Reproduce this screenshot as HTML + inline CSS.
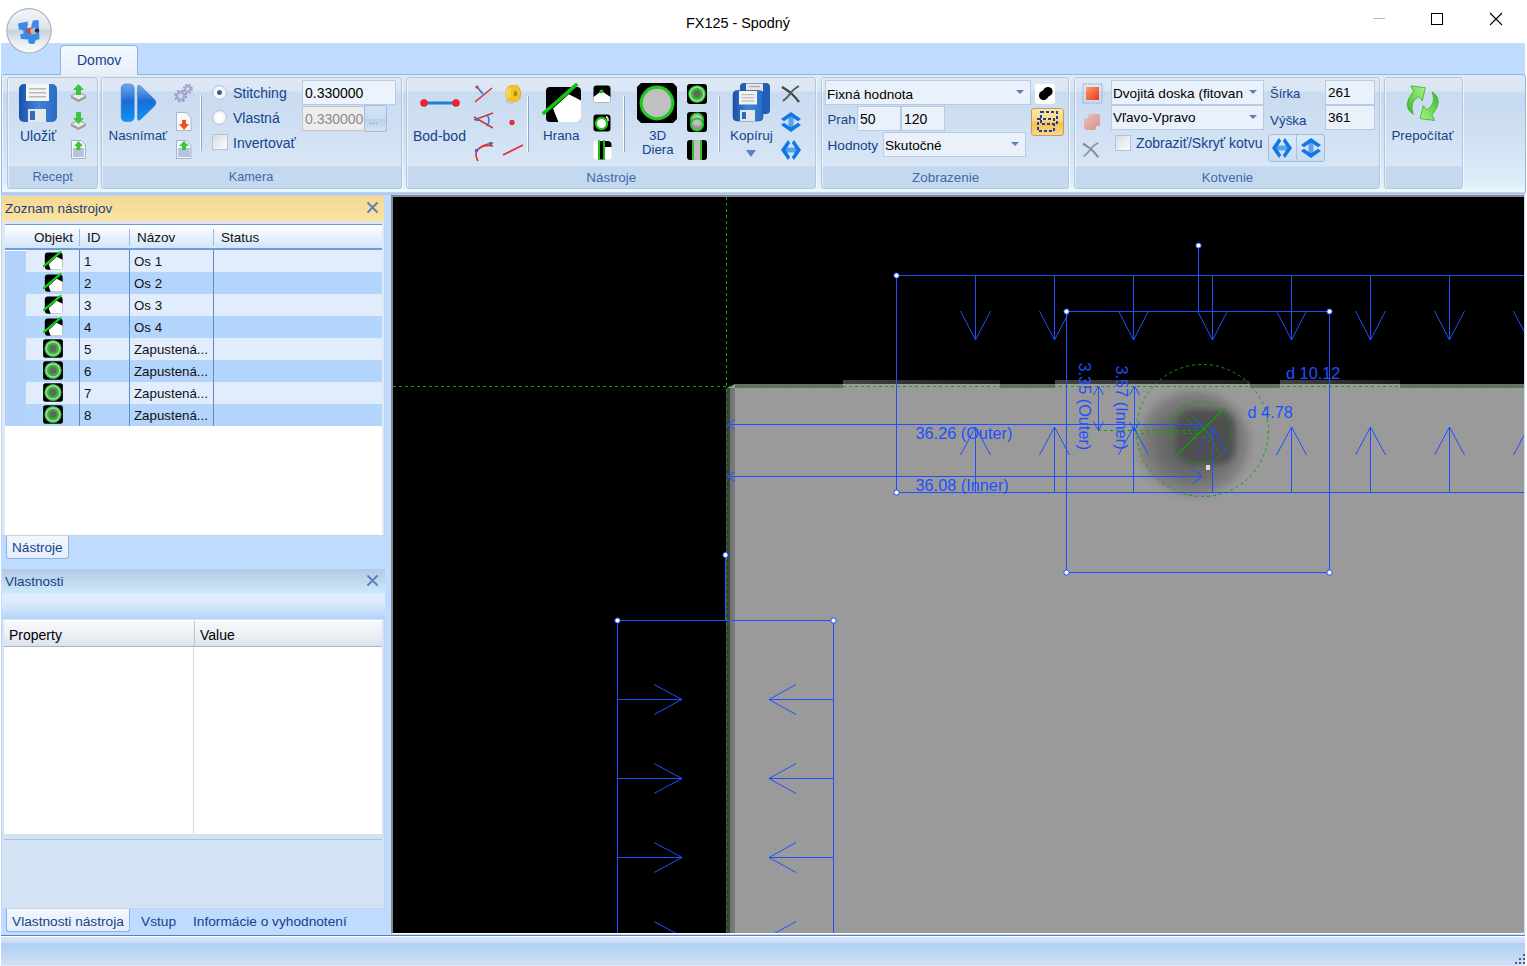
<!DOCTYPE html>
<html><head><meta charset="utf-8">
<style>
*{margin:0;padding:0;box-sizing:border-box}
html,body{width:1527px;height:966px;overflow:hidden;background:#fff;font-family:"Liberation Sans",sans-serif;font-size:14px;position:relative}
.a{position:absolute}
.t{position:absolute;white-space:nowrap;line-height:1}
.lbl{color:#15428b}
.glab{color:#3e6aaa;font-size:13.3px}
.grp{position:absolute;top:77px;height:112px;border:1px solid #b4c7dd;border-radius:3px;box-shadow:inset 1px 0 0 rgba(255,255,255,.55),1px 0 0 rgba(255,255,255,.6);
 background:linear-gradient(#dfe9f5 0px,#dae6f4 13px,#c9dbf0 14px,#d0e0f3 50px,#d8e6f5 88px,#c3d7ee 89px,#c5d9ef 111px)}
.sep{position:absolute;width:2px;background:#8ba7cd;border-left:1px solid #fbfdff}
.inp{position:absolute;background:#eaf1fb;border:1px solid #b5cbe6}
.combo::after{content:"";position:absolute;right:6px;top:9px;border-left:4px solid transparent;border-right:4px solid transparent;border-top:4px solid #5b7fb7}
.row{position:absolute;left:26px;width:356px;height:22px}
.cell{position:absolute;top:0;height:22px;border-left:1px solid #7fa6d9}
</style></head><body>

<!-- title bar -->
<svg class="a" style="left:0;top:0;z-index:5" width="60" height="60" viewBox="0 0 60 60">
<defs><linearGradient id="orb" x1="0" y1="0" x2="0" y2="1"><stop offset="0" stop-color="#f4f6f9"/><stop offset=".45" stop-color="#dde3ea"/><stop offset=".5" stop-color="#c9d2dd"/><stop offset=".75" stop-color="#e6ebf0"/><stop offset="1" stop-color="#fafbfc"/></linearGradient></defs>
<circle cx="29" cy="30.8" r="22.8" fill="#a7b3c1"/>
<circle cx="29" cy="30.8" r="21.6" fill="url(#orb)"/>
<path d="M18 23.5 L27.5 21.5 L28 25 Q26 27.5 29 29 Q32 28 31.5 25 L33 20.5 L38.5 20 L39.5 39 Q36 40 35 41 Q36 44.5 31 44 Q27 43 28.5 39.5 L21 39 L20 34 Q24 35 23.5 31.5 Q22 28.5 19 30Z" fill="#3a8ae8"/>
<path d="M26 29 L31 27.5 L32 33 L27 33.5Z" fill="#d8432e"/>
<rect x="30.5" y="28" width="7" height="6" rx="1.5" fill="#b8b8b8" transform="rotate(-15 34 31)"/>
<circle cx="37" cy="30.5" r="2.3" fill="#23306a"/>
</svg>
<div class="t" style="left:686px;top:15.7px;font-size:14.4px;color:#000">FX125 - Spodný</div>
<div class="a" style="left:1373px;top:18px;width:12px;height:1px;background:#b8b8b8"></div>
<div class="a" style="left:1431px;top:13px;width:12px;height:12px;border:1px solid #000"></div>
<svg class="a" style="left:1489px;top:12px" width="14" height="14"><path d="M1 1L13 13M13 1L1 13" stroke="#000" stroke-width="1.1"/></svg>

<!-- tab strip -->
<div class="a" style="left:1px;top:43px;width:1524px;height:150px;background:#bfdbff"></div>
<div class="a" style="left:60px;top:45px;width:78px;height:31px;border:1px solid #8db2e3;border-bottom:none;border-radius:4px 4px 0 0;background:linear-gradient(#f5f9fe,#e6eef9)"></div>
<div class="t lbl" style="left:77px;top:53px">Domov</div>

<!-- ribbon body -->
<div class="a" style="left:1px;top:74px;width:1525px;height:119px;border:1px solid #92b6e6;border-bottom:none;border-radius:4px 4px 0 0;background:linear-gradient(#e0e9f5 0px,#d9e5f3 17px,#c7d9ef 18px,#cfe0f3 60px,#dcedf9 105px,#e4f5fc 114px,#effcff 115px,#e3f7ff 117px,#9ab1d2 118px)"></div>
<div class="a" style="left:2px;top:75px;width:1px;height:115px;background:#e6f6ff"></div>
<div class="a" style="left:1px;top:193px;width:1524px;height:3px;background:linear-gradient(#aac3e6,#bfdbff)"></div>
<div class="a" style="left:61px;top:74px;width:76px;height:2px;background:#e6eef9"></div>

<!-- groups -->
<div class="grp" style="left:7px;width:91px"></div>
<div class="grp" style="left:101px;width:301px"></div>
<div class="grp" style="left:406px;width:410px"></div>
<div class="grp" style="left:821px;width:248px"></div>
<div class="grp" style="left:1074px;width:306px"></div>
<div class="grp" style="left:1384px;width:79px"></div>


<!-- RECEPT -->
<svg class="a" style="left:18px;top:83px" width="40" height="40" viewBox="0 0 40 40">
 <defs><linearGradient id="fl" x1="0" x2="1"><stop offset="0" stop-color="#1a4fa8"/><stop offset=".5" stop-color="#3d86d8"/><stop offset="1" stop-color="#2a6cc4"/></linearGradient></defs>
 <rect x="1" y="1" width="38" height="38" rx="5" fill="url(#fl)"/>
 <rect x="8" y="1" width="23" height="17" fill="#f4f4f4"/>
 <rect x="11" y="5" width="17" height="1.5" fill="#b9b9b9"/><rect x="11" y="9" width="17" height="1.5" fill="#b9b9b9"/><rect x="11" y="13" width="17" height="1.5" fill="#b9b9b9"/>
 <rect x="10" y="26" width="18" height="13" fill="#e6e6e6"/><rect x="12" y="28" width="5" height="9" fill="#2b6cc8"/>
</svg>
<div class="t lbl" style="left:20px;top:129px;font-size:14px">Uložiť</div>
<svg class="a" style="left:69px;top:83px" width="19" height="21" viewBox="0 0 19 21">
 <path d="M2 13 L9.5 9 L17 13 L9.5 17Z" fill="#e8e8e8" stroke="#a0a0a0"/><path d="M2 13 L2 15 L9.5 19 L17 15 L17 13 L9.5 17Z" fill="#9a9a9a"/>
 <path d="M9.5 1 L15 7 L12 7 L12 12 L7 12 L7 7 L4 7Z" fill="#3cc43c"/>
</svg>
<svg class="a" style="left:69px;top:111px" width="19" height="21" viewBox="0 0 19 21">
 <path d="M2 13 L9.5 9 L17 13 L9.5 17Z" fill="#e8e8e8" stroke="#a0a0a0"/><path d="M2 13 L2 15 L9.5 19 L17 15 L17 13 L9.5 17Z" fill="#9a9a9a"/>
 <path d="M9.5 13 L15 7 L12 7 L12 1 L7 1 L7 7 L4 7Z" fill="#3cc43c"/>
</svg>
<svg class="a" style="left:70px;top:139px" width="17" height="21" viewBox="0 0 17 21">
 <path d="M1.5 1.5 H11 L15.5 6 V19.5 H1.5Z" fill="#f4f6fa" stroke="#9fb3cc"/><rect x="3" y="9" width="11" height="9" fill="#b4c4dc"/>
 <path d="M8.5 2 L13 7 L10.5 7 L10.5 11 L6.5 11 L6.5 7 L4 7Z" fill="#3cc43c"/>
</svg>

<!-- KAMERA -->
<svg class="a" style="left:120px;top:83px" width="38" height="40" viewBox="0 0 38 40">
 <defs><linearGradient id="pb" x1="0" y1="0" x2="0" y2="1"><stop offset="0" stop-color="#6ea8ea"/><stop offset=".3" stop-color="#3b82da"/><stop offset=".45" stop-color="#1a6bd6"/><stop offset="1" stop-color="#0c95f8"/></linearGradient></defs>
 <rect x="1.2" y="1" width="13" height="37.5" rx="4.5" fill="url(#pb)" stroke="#3a78c8" stroke-width=".6"/>
 <path d="M17.5 5 Q17.5 0.5 21 3.5 L34.5 16.5 Q37.5 19.7 34.5 23 L21 36 Q17.5 39 17.5 34.5Z" fill="url(#pb)" stroke="#3a78c8" stroke-width=".6"/>
</svg>
<div class="t lbl" style="left:108.5px;top:129px;font-size:13.4px">Nasnímať</div>
<svg class="a" style="left:173px;top:83px" width="21" height="21" viewBox="0 0 21 21">
 <circle cx="7.6" cy="13" r="5.2" fill="none" stroke="#9c9cc4" stroke-width="2.6" stroke-dasharray="2.2 1.9"/><circle cx="7.6" cy="13" r="3.6" fill="none" stroke="#a8a8d0" stroke-width="2.4"/>
 <circle cx="14.8" cy="5.8" r="3.9" fill="none" stroke="#9c9cc4" stroke-width="2.2" stroke-dasharray="1.7 1.4"/><circle cx="14.8" cy="5.8" r="2.6" fill="none" stroke="#a8a8d0" stroke-width="1.9"/>
</svg>
<svg class="a" style="left:175px;top:111px" width="18" height="21" viewBox="0 0 18 21">
 <path d="M1.5 1.5 H11 L16 6.5 V19.5 H1.5Z" fill="#f7f8fb" stroke="#aab8cc"/>
 <path d="M9 19 L14 13 L11 13 L11 9 L7 9 L7 13 L4 13Z" fill="#f0501e"/>
</svg>
<svg class="a" style="left:175px;top:139px" width="18" height="21" viewBox="0 0 18 21">
 <path d="M1.5 1.5 H11 L16 6.5 V19.5 H1.5Z" fill="#f4f6fa" stroke="#9fb3cc"/><rect x="3" y="9" width="12" height="9" fill="#b4c4dc"/>
 <path d="M9 2 L14 7 L11 7 L11 11 L7 11 L7 7 L4 7Z" fill="#3cc43c"/>
</svg>
<div class="sep" style="left:200px;top:95px;height:56px"></div>
<div class="a" style="left:212px;top:85px;width:15px;height:15px;border-radius:50%;border:1px solid #b5c3d3;background:radial-gradient(#fff 30%,#dfe4ea)"></div>
<div class="a" style="left:217px;top:90px;width:5px;height:5px;border-radius:50%;background:#3a5f94"></div>
<div class="t lbl" style="left:233px;top:86px">Stitching</div>
<div class="a" style="left:212px;top:110px;width:15px;height:15px;border-radius:50%;border:1px solid #b5c3d3;background:radial-gradient(#fff 30%,#dfe4ea)"></div>
<div class="t lbl" style="left:233px;top:111px">Vlastná</div>
<div class="a" style="left:212px;top:134px;width:16px;height:16px;border:1px solid #b5c3d3;background:linear-gradient(135deg,#d8dde3,#fbfcfd)"></div>
<div class="t lbl" style="left:233px;top:136px">Invertovať</div>
<div class="inp" style="left:302px;top:80px;width:94px;height:25px;background:#edf3fc;border-color:#b7cbe5"></div>
<div class="t" style="left:305px;top:86px;color:#000">0.330000</div>
<div class="inp" style="left:302px;top:106px;width:63px;height:25px;background:#ededed;border-color:#c5c5c5"></div>
<div class="t" style="left:305px;top:112px;color:#8b8b8b">0.330000</div>
<div class="a" style="left:364px;top:105px;width:23px;height:27px;border:1px solid #a3bde0;border-radius:2px;background:linear-gradient(#d3e2f4,#cadcf1 50%,#b9d0ec 52%,#d2e3f6)"></div>
<div class="t" style="left:369px;top:114.5px;color:#7d8ea3;font-size:11px">...</div>

<!-- NASTROJE -->
<svg class="a" style="left:418px;top:96px" width="44" height="14" viewBox="0 0 44 14">
 <line x1="6" y1="7" x2="38" y2="7" stroke="#1f7fd6" stroke-width="3"/>
 <circle cx="6" cy="7" r="3.8" fill="#e8242e"/><circle cx="38" cy="7" r="3.8" fill="#e8242e"/>
</svg>
<div class="t lbl" style="left:413px;top:129px">Bod-bod</div>
<svg class="a" style="left:473px;top:83px" width="22" height="22" viewBox="0 0 22 22">
 <line x1="2" y1="19" x2="19" y2="5" stroke="#e0303a" stroke-width="1.6"/><line x1="4" y1="4" x2="10" y2="11" stroke="#1f7fd6" stroke-width="1.8"/><circle cx="4" cy="4" r="1.6" fill="#e0303a"/>
</svg>
<svg class="a" style="left:473px;top:112px" width="22" height="22" viewBox="0 0 22 22">
 <line x1="1" y1="8" x2="20" y2="1" stroke="#e0303a" stroke-width="1.6"/><line x1="1" y1="5" x2="20" y2="16" stroke="#e0303a" stroke-width="1.6"/>
 <path d="M14 3 Q18 8 14 14" fill="none" stroke="#1f7fd6" stroke-width="1.5"/><rect x="3" y="6" width="3" height="3" fill="#1f7fd6"/>
</svg>
<svg class="a" style="left:473px;top:140px" width="22" height="22" viewBox="0 0 22 22">
 <path d="M5 21 Q-1 10 11 6 Q15 5 20 6" fill="none" stroke="#e0303a" stroke-width="1.6"/><path d="M3 11 Q10 4 20 3" fill="none" stroke="#e0303a" stroke-width="1.4"/>
 <rect x="2" y="9" width="3" height="3" fill="#1f7fd6"/><rect x="16" y="2" width="3" height="3" fill="#1f7fd6"/>
</svg>
<svg class="a" style="left:503px;top:83px" width="20" height="22" viewBox="0 0 20 22">
 <defs><linearGradient id="tp" x1="0" x2="1"><stop offset="0" stop-color="#f0d050"/><stop offset=".5" stop-color="#e8b818"/><stop offset="1" stop-color="#d49a08"/></linearGradient></defs>
 <path d="M3 18 L8 21 L11 19 L6 16Z" fill="#d8d8d8" stroke="#a0a0a0" stroke-width=".6"/>
 <path d="M8 2 H12 A6 8.5 0 0 1 12 19 H8 A6 8.5 0 0 1 8 2Z" fill="url(#tp)"/>
 <ellipse cx="12" cy="10.5" rx="5.2" ry="8" fill="#f2c22a"/><ellipse cx="12.5" cy="10.5" rx="1.8" ry="2.8" fill="#b48a10"/>
 <rect x="4" y="6" width="1.2" height="8" fill="#fbe890" opacity=".8"/><rect x="6.5" y="5" width="1.2" height="10" fill="#fbe890" opacity=".8"/>
</svg>
<svg class="a" style="left:503px;top:112.5px" width="20" height="20"><circle cx="9" cy="9.5" r="2.7" fill="#e0303a"/></svg>
<svg class="a" style="left:501px;top:139px" width="24" height="20"><line x1="2" y1="16" x2="22" y2="6" stroke="#e0303a" stroke-width="1.6"/></svg>
<div class="sep" style="left:527px;top:96px;height:56px"></div>
<svg class="a" style="left:541px;top:82px" width="42" height="42" viewBox="0 0 42 42">
 <rect x="5" y="5" width="35" height="35" rx="4" fill="#000"/>
 <path d="M12 26.6 L27.8 12.2 L40 18.5 V36 Q40 40 36 40 H17.4Z" fill="#fff"/>
 <line x1="1.7" y1="32" x2="36.3" y2="1.9" stroke="#12c312" stroke-width="3.6"/>
</svg>
<div class="t lbl" style="left:543px;top:129px;font-size:13.4px">Hrana</div>
<svg class="a" style="left:593px;top:85px" width="18" height="18" viewBox="0 0 18 18">
 <rect x="0.5" y="0.5" width="17" height="17" rx="3" fill="#000"/><path d="M0.5 12 L8.5 6 L17.5 12 V14.5 Q17.5 17.5 14.5 17.5 H3.5 Q0.5 17.5 0.5 14.5Z" fill="#fff"/><circle cx="8.5" cy="6.5" r="2" fill="#18c018"/>
</svg>
<svg class="a" style="left:593px;top:114px" width="18" height="18" viewBox="0 0 18 18">
 <rect x="0.5" y="0.5" width="17" height="17" rx="3" fill="#000"/><circle cx="8.5" cy="9.5" r="5.6" fill="#fff" stroke="#18c818" stroke-width="2.2"/><path d="M13 2.5 Q15.5 4 15 7" fill="none" stroke="#e8e8e8" stroke-width="1.6"/>
</svg>
<svg class="a" style="left:593px;top:140px" width="19" height="20" viewBox="0 0 19 20">
 <rect x="0.5" y="0.5" width="18" height="19" rx="3" fill="#fff"/><path d="M10 1 H15 Q18.5 1 18.5 4.5 V7 H13 Q11 7 11 10 V19.5 H6.5 V1Z" fill="#000"/><rect x="5" y="0" width="1.8" height="20" fill="#18c818"/><rect x="10.2" y="0" width="1.8" height="20" fill="#18c818"/>
</svg>
<div class="sep" style="left:623px;top:96px;height:56px"></div>
<svg class="a" style="left:636px;top:82px" width="42" height="42" viewBox="0 0 42 42">
 <path d="M5 1 H37 L41 5 V37 L37 41 H5 L1 37 V5Z" fill="#000"/>
 <circle cx="21" cy="21" r="15.8" fill="#c0c0c0" stroke="#22c822" stroke-width="3.2"/>
</svg>
<div class="t lbl" style="left:649px;top:128.5px;font-size:13.5px">3D</div>
<div class="t lbl" style="left:642px;top:143px;font-size:13.2px">Diera</div>
<svg class="a" style="left:686px;top:83px" width="22" height="22" viewBox="0 0 22 22">
 <rect x="1" y="1" width="20" height="20" rx="3" fill="#000"/><circle cx="11" cy="11" r="8.8" fill="#26cc26"/><circle cx="11" cy="11" r="6.8" fill="none" stroke="#cdbccd" stroke-width="1.5"/><circle cx="11" cy="11" r="5.8" fill="#1fc21f"/><circle cx="11" cy="11" r="3.4" fill="#6e5f6e"/>
</svg>
<svg class="a" style="left:686px;top:111px" width="22" height="22" viewBox="0 0 22 22">
 <rect x="1" y="1" width="20" height="20" rx="3" fill="#000"/><circle cx="11" cy="8.5" r="6" fill="#c8b8c8" stroke="#22c822" stroke-width="2"/><circle cx="11" cy="13.5" r="6" fill="#c8b8c8" stroke="#22c822" stroke-width="2" fill-opacity=".8"/>
</svg>
<svg class="a" style="left:686px;top:139px" width="22" height="22" viewBox="0 0 22 22">
 <rect x="1" y="1" width="20" height="20" rx="3" fill="#000"/><rect x="7" y="1" width="8" height="20" fill="#c8b8c8"/><rect x="6" y="1" width="2" height="20" fill="#22c822"/><rect x="14" y="1" width="2" height="20" fill="#22c822"/>
</svg>
<div class="sep" style="left:718px;top:96px;height:56px"></div>
<svg class="a" style="left:731px;top:82px" width="40" height="40" viewBox="0 0 40 40">
 <rect x="9" y="1" width="30" height="31" rx="4" fill="#1f5fb8"/><rect x="15" y="1.5" width="17" height="8" fill="#e4e4e4"/><rect x="18" y="4" width="11" height="1.2" fill="#aaa"/>
 <rect x="2" y="8.5" width="30" height="30.5" rx="4" fill="url(#fl)" stroke="#1c4f9c" stroke-width=".6"/><rect x="8" y="9" width="18" height="13.5" fill="#f2f2f2"/>
 <rect x="10.5" y="12" width="13" height="1.2" fill="#b9b9b9"/><rect x="10.5" y="15.2" width="13" height="1.2" fill="#b9b9b9"/><rect x="10.5" y="18.4" width="13" height="1.2" fill="#b9b9b9"/>
 <rect x="9" y="28" width="15" height="11" fill="#e6e6e6"/><rect x="11" y="30" width="4" height="7" fill="#2b6cc8"/>
</svg>
<div class="t lbl" style="left:730px;top:129px;font-size:13.5px">Kopíruj</div>
<div class="a" style="left:746px;top:150px;border-left:5.5px solid transparent;border-right:5.5px solid transparent;border-top:7px solid #5a80bd"></div>
<svg class="a" style="left:780px;top:84px" width="22" height="20" viewBox="0 0 22 20">
 <path d="M2 3 Q10 8 12 10 Q16 14 19 18" fill="none" stroke="#444" stroke-width="2.2"/><path d="M19 2 Q12 6 10 10 Q7 14 3 17" fill="none" stroke="#555" stroke-width="2"/>
</svg>
<svg class="a" style="left:780px;top:111px" width="22" height="22" viewBox="0 0 22 22">
 <rect x="8.5" y="5" width="5" height="12" fill="#5aa2ec"/><path d="M11 1 L21 8 L18 10.2 L11 5.5 L4 10.2 L1 8Z" fill="#1177e6"/><path d="M11 21 L21 14 L18 11.8 L11 16.5 L4 11.8 L1 14Z" fill="#1177e6"/>
</svg>
<svg class="a" style="left:780px;top:139px" width="22" height="22" viewBox="0 0 22 22">
 <rect x="5" y="8.5" width="12" height="5" fill="#5aa2ec"/><path d="M1 11 L8 1 L10.2 4 L5.5 11 L10.2 18 L8 21Z" fill="#1177e6"/><path d="M21 11 L14 1 L11.8 4 L16.5 11 L11.8 18 L14 21Z" fill="#1177e6"/>
</svg>

<!-- ZOBRAZENIE -->
<div class="inp combo" style="left:825px;top:80px;width:206px;height:25px"></div>
<div class="t" style="left:827px;top:87.5px;color:#000;font-size:13.6px">Fixná hodnota</div>
<div class="a" style="left:1035px;top:84px;width:20px;height:20px;background:#fff;border-radius:3px"></div>
<svg class="a" style="left:1035px;top:84px" width="20" height="20"><circle cx="8.5" cy="11.6" r="4.6" fill="#000"/><circle cx="13" cy="7.5" r="4.6" fill="#000"/><path d="M5.5 8.5 L10 4.5 L16 10.5 L11.5 14.5Z" fill="#000"/></svg>
<div class="t lbl" style="left:827.5px;top:112.5px;font-size:13.3px">Prah</div>
<div class="inp" style="left:857px;top:106px;width:44px;height:25px"></div>
<div class="t" style="left:860px;top:112px;color:#000">50</div>
<div class="inp" style="left:901px;top:106px;width:44px;height:25px"></div>
<div class="t" style="left:904px;top:112px;color:#000">120</div>
<div class="a" style="left:1031px;top:108px;width:33px;height:28px;border:1px solid #c2a05a;border-radius:3px;background:linear-gradient(#fde7a9,#fbd77e 45%,#f7bf4d 55%,#fbd98a)"></div>
<svg class="a" style="left:1036px;top:111px" width="23" height="22" viewBox="0 0 23 22">
 <rect x="5" y="1" width="16" height="12" fill="none" stroke="#1f3f9a" stroke-width="2" stroke-dasharray="3 2"/>
 <rect x="2" y="8" width="16" height="12" fill="none" stroke="#1f3f9a" stroke-width="2" stroke-dasharray="3 2"/>
</svg>
<div class="t lbl" style="left:827.5px;top:138.5px;font-size:13.6px">Hodnoty</div>
<div class="inp combo" style="left:883px;top:132px;width:143px;height:25px"></div>
<div class="t" style="left:885px;top:138.5px;color:#000;font-size:13.6px">Skutočné</div>

<!-- KOTVENIE -->
<svg class="a" style="left:1082px;top:83px" width="21" height="21" viewBox="0 0 21 21">
 <rect x="1" y="1" width="19" height="19" fill="none" stroke="#7f9fd0" stroke-dasharray="1.5 1"/><defs><linearGradient id="rs" x1="0" y1="0" x2="1" y2="1"><stop offset="0" stop-color="#ff9a6a"/><stop offset="1" stop-color="#e8381a"/></linearGradient></defs><rect x="4" y="4" width="13" height="13" fill="url(#rs)"/>
</svg>
<svg class="a" style="left:1082px;top:112px" width="20" height="20" viewBox="0 0 20 20" opacity=".45">
 <rect x="6" y="2" width="12" height="12" rx="2" fill="url(#rs)"/><rect x="2" y="6" width="12" height="12" rx="2" fill="url(#rs)"/>
</svg>
<svg class="a" style="left:1081px;top:140px" width="20" height="20" viewBox="0 0 22 20" opacity=".55">
 <path d="M2 3 Q10 8 12 10 Q16 14 19 18" fill="none" stroke="#444" stroke-width="2.2"/><path d="M19 2 Q12 6 10 10 Q7 14 3 17" fill="none" stroke="#555" stroke-width="2"/>
</svg>
<div class="inp combo" style="left:1111px;top:80px;width:153px;height:25px"></div>
<div class="t" style="left:1113px;top:86.6px;color:#000;font-size:13.6px">Dvojitá doska (fitovan</div>
<div class="inp combo" style="left:1111px;top:105px;width:153px;height:25px"></div>
<div class="t" style="left:1113px;top:111.4px;color:#000;font-size:13.6px">Vľavo-Vpravo</div>
<div class="a" style="left:1115px;top:135px;width:16px;height:16px;border:1px solid #b5c3d3;background:linear-gradient(135deg,#d8dde3,#fbfcfd)"></div>
<div class="t lbl" style="left:1136px;top:136px">Zobraziť/Skryť kotvu</div>
<div class="t lbl" style="left:1270px;top:87.4px;font-size:13px">Šírka</div>
<div class="t lbl" style="left:1270px;top:113.6px;font-size:13.4px">Výška</div>
<div class="inp" style="left:1325px;top:80px;width:50px;height:25px"></div>
<div class="t" style="left:1328px;top:86px;color:#000;font-size:13.6px">261</div>
<div class="inp" style="left:1325px;top:105px;width:50px;height:25px"></div>
<div class="t" style="left:1328px;top:111px;color:#000;font-size:13.6px">361</div>
<div class="a" style="left:1268px;top:134px;width:57px;height:28px;border:1px solid #9fbbe0;border-radius:3px;background:linear-gradient(#dde9f7,#c9dbf1)"></div>
<div class="a" style="left:1296px;top:135px;width:1px;height:26px;background:#a9c1e0"></div>
<svg class="a" style="left:1271px;top:137px" width="22" height="22" viewBox="0 0 22 22">
 <rect x="5" y="8.5" width="12" height="5" fill="#5aa2ec"/><path d="M1 11 L8 1 L10.2 4 L5.5 11 L10.2 18 L8 21Z" fill="#1177e6"/><path d="M21 11 L14 1 L11.8 4 L16.5 11 L11.8 18 L14 21Z" fill="#1177e6"/>
</svg>
<svg class="a" style="left:1300px;top:137px" width="22" height="22" viewBox="0 0 22 22">
 <rect x="8.5" y="5" width="5" height="12" fill="#5aa2ec"/><path d="M11 1 L21 8 L18 10.2 L11 5.5 L4 10.2 L1 8Z" fill="#1177e6"/><path d="M11 21 L21 14 L18 11.8 L11 16.5 L4 11.8 L1 14Z" fill="#1177e6"/>
</svg>

<!-- PREPOCITAT -->
<svg class="a" style="left:1400px;top:82px" width="46" height="44" viewBox="0 0 46 44">
 <defs><linearGradient id="gr" x1="0" y1="1" x2="1" y2="0"><stop offset="0" stop-color="#35b52a"/><stop offset=".6" stop-color="#7fe060"/><stop offset="1" stop-color="#a9f38a"/></linearGradient>
 <linearGradient id="gr2" x1="1" y1="0" x2="0" y2="1"><stop offset="0" stop-color="#35b52a"/><stop offset=".6" stop-color="#7fe060"/><stop offset="1" stop-color="#a9f38a"/></linearGradient></defs>
 <path d="M10.7 3.8 L25.3 5.7 L22.3 18.7 L18.5 14.5 Q9 20 13.3 32.5 Q1 24 13.5 9.5Z" fill="url(#gr)" stroke="#3aae2c" stroke-width=".8" stroke-linejoin="round"/>
 <path d="M34.8 38.5 L20.2 36.6 L23.2 23.6 L27 27.8 Q36.5 22.3 32.2 9.8 Q44.5 18.3 32 32.8Z" fill="url(#gr2)" stroke="#3aae2c" stroke-width=".8" stroke-linejoin="round"/>
</svg>
<div class="t lbl" style="left:1391.5px;top:129.2px;font-size:13.3px">Prepočítať</div>
<div class="t glab" style="left:-47.3px;width:200px;text-align:center;top:171.41px;font-size:12.7px">Recept</div>
<div class="t glab" style="left:151px;width:200px;text-align:center;top:171.41px;font-size:12.7px">Kamera</div>
<div class="t glab" style="left:511.3px;width:200px;text-align:center;top:170.81px;font-size:13.4px">Nástroje</div>
<div class="t glab" style="left:845.6px;width:200px;text-align:center;top:170.81px;font-size:13.4px">Zobrazenie</div>
<div class="t glab" style="left:1127.5px;width:200px;text-align:center;top:170.99px;font-size:13.2px">Kotvenie</div>

<!-- main background & left panel -->
<div class="a" style="left:1px;top:196px;width:1524px;height:740px;background:#bfdbff"></div>


<!-- LEFT PANEL: Zoznam nastrojov -->
<div class="a" style="left:1px;top:221px;width:384px;height:315px;background:#dfe9f5;border:1px solid #c3d4ea;border-top:none"></div>
<div class="a" style="left:2px;top:196px;width:382px;height:25px;background:linear-gradient(#f3d896,#fde3a0)"></div>
<div class="t" style="left:5px;top:201.5px;color:#1c3d78;font-size:13.5px">Zoznam nástrojov</div>
<svg class="a" style="left:366px;top:201px" width="13" height="13"><path d="M1.5 1.5L11.5 11.5M11.5 1.5L1.5 11.5" stroke="#5a7fb6" stroke-width="1.8"/></svg>
<div class="a" style="left:5px;top:224px;width:377px;height:311px;background:#fff"></div>
<div class="a" style="left:5px;top:224px;width:377px;height:26px;border-top:1px solid #6a98d6;border-bottom:2px solid #6f9bd8;background:linear-gradient(#ffffff,#d3e4f9)"></div>
<div class="a" style="left:79px;top:229px;width:1px;height:17px;background:#98bdea"></div>
<div class="a" style="left:129px;top:229px;width:1px;height:17px;background:#98bdea"></div>
<div class="a" style="left:213px;top:229px;width:1px;height:17px;background:#98bdea"></div>
<div class="t" style="left:34px;top:231px;color:#111;font-size:13.5px">Objekt</div>
<div class="t" style="left:87px;top:231px;color:#111;font-size:13.5px">ID</div>
<div class="t" style="left:137px;top:231px;color:#111;font-size:13.5px">Názov</div>
<div class="t" style="left:221px;top:231px;color:#111;font-size:13.5px">Status</div>
<div class="a" style="left:5px;top:250px;width:21px;height:176px;background:#b2d2fa"></div>
<div class="a" style="left:5px;top:250px;width:22px;height:1px;background:#fff"></div>
<div class="a" style="left:26px;top:250px;width:1px;height:22px;background:#fff"></div>
<div class="a" style="left:26px;top:250px;width:356px;height:22px;background:#e1edfd"></div>
<svg class="a" style="left:43px;top:251px" width="21" height="21" viewBox="0 0 21 21"><rect x="1.8" y="1.6" width="17.8" height="17.2" rx="3" fill="#000"/><path d="M5.6 13.3 L13.7 5.7 L19.6 8.8 V16.8 Q19.6 18.8 17.6 18.8 H7.7Z" fill="#fff"/><line x1="0.8" y1="15.2" x2="17.6" y2="0.9" stroke="#14d214" stroke-width="2.2" stroke-linecap="round"/></svg>
<div class="t" style="left:84px;top:254.5px;color:#111;font-size:13.3px">1</div>
<div class="t" style="left:134px;top:254.5px;color:#111;font-size:13.3px">Os 1</div>
<div class="a" style="left:26px;top:272px;width:356px;height:22px;background:#b3d4fb"></div>
<svg class="a" style="left:43px;top:273px" width="21" height="21" viewBox="0 0 21 21"><rect x="1.8" y="1.6" width="17.8" height="17.2" rx="3" fill="#000"/><path d="M5.6 13.3 L13.7 5.7 L19.6 8.8 V16.8 Q19.6 18.8 17.6 18.8 H7.7Z" fill="#fff"/><line x1="0.8" y1="15.2" x2="17.6" y2="0.9" stroke="#14d214" stroke-width="2.2" stroke-linecap="round"/></svg>
<div class="t" style="left:84px;top:276.5px;color:#111;font-size:13.3px">2</div>
<div class="t" style="left:134px;top:276.5px;color:#111;font-size:13.3px">Os 2</div>
<div class="a" style="left:26px;top:294px;width:356px;height:22px;background:#e1edfd"></div>
<svg class="a" style="left:43px;top:295px" width="21" height="21" viewBox="0 0 21 21"><rect x="1.8" y="1.6" width="17.8" height="17.2" rx="3" fill="#000"/><path d="M5.6 13.3 L13.7 5.7 L19.6 8.8 V16.8 Q19.6 18.8 17.6 18.8 H7.7Z" fill="#fff"/><line x1="0.8" y1="15.2" x2="17.6" y2="0.9" stroke="#14d214" stroke-width="2.2" stroke-linecap="round"/></svg>
<div class="t" style="left:84px;top:298.5px;color:#111;font-size:13.3px">3</div>
<div class="t" style="left:134px;top:298.5px;color:#111;font-size:13.3px">Os 3</div>
<div class="a" style="left:26px;top:316px;width:356px;height:22px;background:#b3d4fb"></div>
<svg class="a" style="left:43px;top:317px" width="21" height="21" viewBox="0 0 21 21"><rect x="1.8" y="1.6" width="17.8" height="17.2" rx="3" fill="#000"/><path d="M5.6 13.3 L13.7 5.7 L19.6 8.8 V16.8 Q19.6 18.8 17.6 18.8 H7.7Z" fill="#fff"/><line x1="0.8" y1="15.2" x2="17.6" y2="0.9" stroke="#14d214" stroke-width="2.2" stroke-linecap="round"/></svg>
<div class="t" style="left:84px;top:320.5px;color:#111;font-size:13.3px">4</div>
<div class="t" style="left:134px;top:320.5px;color:#111;font-size:13.3px">Os 4</div>
<div class="a" style="left:26px;top:338px;width:356px;height:22px;background:#e1edfd"></div>
<svg class="a" style="left:43px;top:339px" width="20" height="20" viewBox="0 0 20 20"><rect x="0.1" y="0.2" width="19.8" height="18.6" rx="2.5" fill="#000"/><circle cx="10" cy="9.5" r="8.6" fill="#26cc26"/><circle cx="10" cy="9.5" r="6.6" fill="none" stroke="#cdbccd" stroke-width="1.5"/><circle cx="10" cy="9.5" r="5.6" fill="#1fc21f"/><circle cx="10" cy="9.5" r="3.4" fill="#6e5f6e"/></svg>
<div class="t" style="left:84px;top:342.5px;color:#111;font-size:13.3px">5</div>
<div class="t" style="left:134px;top:342.5px;color:#111;font-size:13.3px">Zapustená...</div>
<div class="a" style="left:26px;top:360px;width:356px;height:22px;background:#b3d4fb"></div>
<svg class="a" style="left:43px;top:361px" width="20" height="20" viewBox="0 0 20 20"><rect x="0.1" y="0.2" width="19.8" height="18.6" rx="2.5" fill="#000"/><circle cx="10" cy="9.5" r="8.6" fill="#26cc26"/><circle cx="10" cy="9.5" r="6.6" fill="none" stroke="#cdbccd" stroke-width="1.5"/><circle cx="10" cy="9.5" r="5.6" fill="#1fc21f"/><circle cx="10" cy="9.5" r="3.4" fill="#6e5f6e"/></svg>
<div class="t" style="left:84px;top:364.5px;color:#111;font-size:13.3px">6</div>
<div class="t" style="left:134px;top:364.5px;color:#111;font-size:13.3px">Zapustená...</div>
<div class="a" style="left:26px;top:382px;width:356px;height:22px;background:#e1edfd"></div>
<svg class="a" style="left:43px;top:383px" width="20" height="20" viewBox="0 0 20 20"><rect x="0.1" y="0.2" width="19.8" height="18.6" rx="2.5" fill="#000"/><circle cx="10" cy="9.5" r="8.6" fill="#26cc26"/><circle cx="10" cy="9.5" r="6.6" fill="none" stroke="#cdbccd" stroke-width="1.5"/><circle cx="10" cy="9.5" r="5.6" fill="#1fc21f"/><circle cx="10" cy="9.5" r="3.4" fill="#6e5f6e"/></svg>
<div class="t" style="left:84px;top:386.5px;color:#111;font-size:13.3px">7</div>
<div class="t" style="left:134px;top:386.5px;color:#111;font-size:13.3px">Zapustená...</div>
<div class="a" style="left:26px;top:404px;width:356px;height:22px;background:#b3d4fb"></div>
<svg class="a" style="left:43px;top:405px" width="20" height="20" viewBox="0 0 20 20"><rect x="0.1" y="0.2" width="19.8" height="18.6" rx="2.5" fill="#000"/><circle cx="10" cy="9.5" r="8.6" fill="#26cc26"/><circle cx="10" cy="9.5" r="6.6" fill="none" stroke="#cdbccd" stroke-width="1.5"/><circle cx="10" cy="9.5" r="5.6" fill="#1fc21f"/><circle cx="10" cy="9.5" r="3.4" fill="#6e5f6e"/></svg>
<div class="t" style="left:84px;top:408.5px;color:#111;font-size:13.3px">8</div>
<div class="t" style="left:134px;top:408.5px;color:#111;font-size:13.3px">Zapustená...</div>

<div class="a" style="left:79px;top:250px;width:1px;height:176px;background:#5f8bc9"></div>
<div class="a" style="left:129px;top:250px;width:1px;height:176px;background:#5f8bc9"></div>
<div class="a" style="left:213px;top:250px;width:1px;height:176px;background:#5f8bc9"></div>
<div class="a" style="left:6px;top:536px;width:63px;height:23px;border:1px solid #8db2e3;border-top:none;border-radius:0 0 3px 3px;background:linear-gradient(#f3f7fd,#e3edfa)"></div>
<div class="t lbl" style="left:12px;top:541px;font-size:13.6px">Nástroje</div>

<!-- LEFT PANEL: Vlastnosti -->
<div class="a" style="left:2px;top:569px;width:383px;height:25px;background:linear-gradient(#b3c9e4,#c2dbf0 55%,#cdebfd)"></div>
<div class="t lbl" style="left:5px;top:574.5px;font-size:13.5px">Vlastnosti</div>
<svg class="a" style="left:366px;top:574px" width="13" height="13"><path d="M1.5 1.5L11.5 11.5M11.5 1.5L1.5 11.5" stroke="#5a7fb6" stroke-width="1.8"/></svg>
<div class="a" style="left:2px;top:594px;width:383px;height:25px;background:linear-gradient(#e2eefd,#dceafc 35%,#b3d2fa)"></div>
<div class="a" style="left:1px;top:619px;width:384px;height:290px;background:#d4e3f3;border:1px solid #c3d4ea;border-top:none"></div>
<div class="a" style="left:4px;top:620px;width:378px;height:214px;background:#fff"></div>
<div class="a" style="left:4px;top:621px;width:378px;height:26px;border-bottom:1px solid #9fb7d5;background:linear-gradient(#f8f9fb,#eaeef4 60%,#dce2eb)"></div>
<div class="a" style="left:194px;top:621px;width:1px;height:25px;background:#b8c4d3"></div>
<div class="a" style="left:193px;top:647px;width:1px;height:187px;background:#cfdbe9"></div>
<div class="t" style="left:9px;top:628px;color:#000;font-size:14px">Property</div>
<div class="t" style="left:200px;top:628px;color:#000;font-size:14px">Value</div>
<div class="a" style="left:4px;top:839px;width:378px;height:1px;background:#aac4e4"></div>
<div class="a" style="left:6px;top:909px;width:124px;height:23px;border:1px solid #8db2e3;border-top:none;border-radius:0 0 3px 3px;background:linear-gradient(#f3f7fd,#e3edfa)"></div>
<div class="t lbl" style="left:12px;top:914.8px;font-size:13.7px">Vlastnosti nástroja</div>
<div class="t lbl" style="left:141px;top:914.8px;font-size:13.7px">Vstup</div>
<div class="t lbl" style="left:193px;top:914.8px;font-size:13.7px">Informácie o vyhodnotení</div>

<!-- viewport -->
<div class="a" style="left:391px;top:195px;width:1133px;height:739px;background:#000;border-top:2px solid #8a8a8a;border-left:2px solid #8a8a8a;border-bottom:1px solid #fff"></div>

<!-- viewport svg -->
<svg class="a" style="left:393px;top:197px" width="1131" height="736" viewBox="393 197 1131 736"><defs><linearGradient id="gl" gradientUnits="userSpaceOnUse" x1="726" y1="0" x2="736" y2="0"><stop offset="0" stop-color="#383838"/><stop offset=".38" stop-color="#444"/><stop offset=".42" stop-color="#727272"/><stop offset=".88" stop-color="#7c7c7c"/><stop offset=".92" stop-color="#9a9a9a"/></linearGradient><radialGradient id="hole" cx="0.5" cy="0.5" r="0.5"><stop offset="0" stop-color="#595959"/><stop offset=".5" stop-color="#6a6a6a"/><stop offset=".78" stop-color="#818181"/><stop offset="1" stop-color="#9a9a9a" stop-opacity="0"/></radialGradient></defs><rect x="393" y="197" width="1131" height="736" fill="#000"/><path d="M727 388 L735 384 L1524 384 L1524 933 L727 933Z" fill="#9a9a9a"/><rect x="726" y="388" width="10" height="545" fill="url(#gl)"/><rect x="735" y="384" width="108" height="4" fill="#6e6e6e"/><rect x="1000" y="384" width="55" height="4" fill="#6e6e6e"/><rect x="1250" y="384" width="30" height="4" fill="#6e6e6e"/><rect x="1400" y="384" width="124" height="4" fill="#6e6e6e"/><defs><linearGradient id="db" x1="0" x2="1"><stop offset="0" stop-color="#444"/><stop offset="1" stop-color="#1c1c1c"/></linearGradient></defs><rect x="843" y="380" width="157" height="4" fill="url(#db)"/><rect x="1055" y="380" width="195" height="4" fill="url(#db)"/><rect x="1280" y="380" width="120" height="4" fill="url(#db)"/><clipPath id="gc"><rect x="727" y="384" width="797" height="549"/></clipPath><filter id="bl" x="-50%" y="-50%" width="200%" height="200%"><feGaussianBlur stdDeviation="3"/></filter><g clip-path="url(#gc)"><ellipse cx="1194" cy="443" rx="66" ry="62" fill="url(#hole)"/><rect x="1176" y="410" width="59" height="54" rx="16" fill="#505050" filter="url(#bl)"/></g><rect x="1206" y="465" width="4" height="5" fill="#d8d8d8"/><line x1="726.5" y1="197" x2="726.5" y2="933" stroke="#0fa20f" stroke-dasharray="3 3"/><line x1="393" y1="386.5" x2="1524" y2="386.5" stroke="#0fa20f" stroke-dasharray="3 3"/><circle cx="1202.5" cy="430.5" r="66" fill="none" stroke="#0fa20f" stroke-dasharray="3 3"/><circle cx="1199.5" cy="432.5" r="31" fill="none" stroke="#0fa20f" stroke-dasharray="3 3"/><line x1="1098" y1="430.5" x2="1200" y2="430.5" stroke="#0fa20f" stroke-dasharray="3 3"/><line x1="1135" y1="433.5" x2="1200" y2="433.5" stroke="#0fa20f" stroke-dasharray="3 3"/><line x1="1179" y1="453" x2="1225" y2="408" stroke="#0fa20f" stroke-width="1.2"/><line x1="1178" y1="410" x2="1218" y2="450" stroke="#0fa20f" stroke-dasharray="3 3"/><line x1="1193" y1="416" x2="1212" y2="438" stroke="#0fa20f" stroke-width="1"/><path d="M896 275.5L1524 275.5 M896.5 275L896.5 492 M896 492.5L1524 492.5 M1198.5 245L1198.5 311 M1066 311.5L1329 311.5 M1066.5 311L1066.5 572 M1329.5 311L1329.5 572 M1066 572.5L1329 572.5 M975.5 275L975.5 340 M960.5 311L975.5 340L990.5 311 M975.5 492L975.5 427 M960.5 455L975.5 427L990.5 455 M1054.5 275L1054.5 340 M1039.5 311L1054.5 340L1069.5 311 M1054.5 492L1054.5 427 M1039.5 455L1054.5 427L1069.5 455 M1133.5 275L1133.5 340 M1118.5 311L1133.5 340L1148.5 311 M1133.5 492L1133.5 427 M1118.5 455L1133.5 427L1148.5 455 M1212.5 275L1212.5 340 M1197.5 311L1212.5 340L1227.5 311 M1212.5 492L1212.5 427 M1197.5 455L1212.5 427L1227.5 455 M1291.5 275L1291.5 340 M1276.5 311L1291.5 340L1306.5 311 M1291.5 492L1291.5 427 M1276.5 455L1291.5 427L1306.5 455 M1370.5 275L1370.5 340 M1355.5 311L1370.5 340L1385.5 311 M1370.5 492L1370.5 427 M1355.5 455L1370.5 427L1385.5 455 M1449.5 275L1449.5 340 M1434.5 311L1449.5 340L1464.5 311 M1449.5 492L1449.5 427 M1434.5 455L1449.5 427L1464.5 455 M1528.5 275L1528.5 340 M1513.5 311L1528.5 340L1543.5 311 M1528.5 492L1528.5 427 M1513.5 455L1528.5 427L1543.5 455 M727 424.5L1202 424.5 M735 419.5L727 424.5L735 429.5 M1193 417.5L1202 424.5L1193 431.5 M727 476.5L1202 476.5 M735 471.5L727 476.5L735 481.5 M1193 469.5L1202 476.5L1193 483.5 M1098.5 386L1098.5 430.5 M1093.5 395L1098.5 386L1103.5 395 M1093.5 421.5L1098.5 430.5L1103.5 421.5 M1134.5 386L1134.5 431 M1129.5 395L1134.5 386L1139.5 395 M1129.5 422L1134.5 431L1139.5 422 M617 620.5L833 620.5 M617.5 620L617.5 933 M833.5 620L833.5 933 M725.5 555L725.5 620 M617 699.5L682 699.5 M654 684.5L682 699.5L654 714.5 M833 699.5L769 699.5 M796 684.5L769 699.5L796 714.5 M617 778.5L682 778.5 M654 763.5L682 778.5L654 793.5 M833 778.5L769 778.5 M796 763.5L769 778.5L796 793.5 M617 857.5L682 857.5 M654 842.5L682 857.5L654 872.5 M833 857.5L769 857.5 M796 842.5L769 857.5L796 872.5 M617 936.5L682 936.5 M654 921.5L682 936.5L654 951.5 M833 936.5L769 936.5 M796 921.5L769 936.5L796 951.5" fill="none" stroke="#1e50ff" stroke-width="1"/><circle cx="896.5" cy="275.5" r="2.6" fill="#fff" stroke="#1e50ff" stroke-width="1"/><circle cx="896.5" cy="492.5" r="2.6" fill="#fff" stroke="#1e50ff" stroke-width="1"/><circle cx="1198.5" cy="245.5" r="2.6" fill="#fff" stroke="#1e50ff" stroke-width="1"/><circle cx="1066.5" cy="311.5" r="2.6" fill="#fff" stroke="#1e50ff" stroke-width="1"/><circle cx="1329.5" cy="311.5" r="2.6" fill="#fff" stroke="#1e50ff" stroke-width="1"/><circle cx="1066.5" cy="572.5" r="2.6" fill="#fff" stroke="#1e50ff" stroke-width="1"/><circle cx="1329.5" cy="572.5" r="2.6" fill="#fff" stroke="#1e50ff" stroke-width="1"/><circle cx="617.5" cy="620.5" r="2.6" fill="#fff" stroke="#1e50ff" stroke-width="1"/><circle cx="833.5" cy="620.5" r="2.6" fill="#fff" stroke="#1e50ff" stroke-width="1"/><circle cx="725.5" cy="555" r="2.6" fill="#fff" stroke="#1e50ff" stroke-width="1"/><text x="915.5" y="438.8" font-family="Liberation Sans" font-size="16.3" fill="#1e50ff">36.26 (Outer)</text><text x="915.5" y="490.7" font-family="Liberation Sans" font-size="16.3" fill="#1e50ff">36.08 (Inner)</text><text x="1286" y="378.7" font-family="Liberation Sans" font-size="16.3" fill="#1e50ff">d 10.12</text><text x="1247.5" y="417.5" font-family="Liberation Sans" font-size="16.3" fill="#1e50ff">d 4.78</text><text transform="translate(1079 362.5) rotate(90)" font-family="Liberation Sans" font-size="16.3" fill="#1e50ff">3.35 (Outer)</text><text transform="translate(1116 365.5) rotate(90)" font-family="Liberation Sans" font-size="16.3" fill="#1e50ff">3.57 (Inner)</text></svg>

<!-- status bar -->
<div class="a" style="left:1px;top:935px;width:1524px;height:31px;border-top:1px solid #5a80b4;background:linear-gradient(#ffffff 0px,#ffffff 1px,#d5e4f9 1px,#cbdcf6 7px,#b1cff4 7.5px,#bad5f5 15px,#cfe0f7 29px,#eef4fc 30px)"></div>

<div class="a" style="left:1523px;top:954px;width:2px;height:2px;background:#3f5f8c"></div><div class="a" style="left:1519px;top:958px;width:2px;height:2px;background:#3f5f8c"></div><div class="a" style="left:1523px;top:958px;width:2px;height:2px;background:#3f5f8c"></div><div class="a" style="left:1515px;top:962px;width:2px;height:2px;background:#3f5f8c"></div><div class="a" style="left:1519px;top:962px;width:2px;height:2px;background:#3f5f8c"></div><div class="a" style="left:1523px;top:962px;width:2px;height:2px;background:#3f5f8c"></div>
</body></html>
